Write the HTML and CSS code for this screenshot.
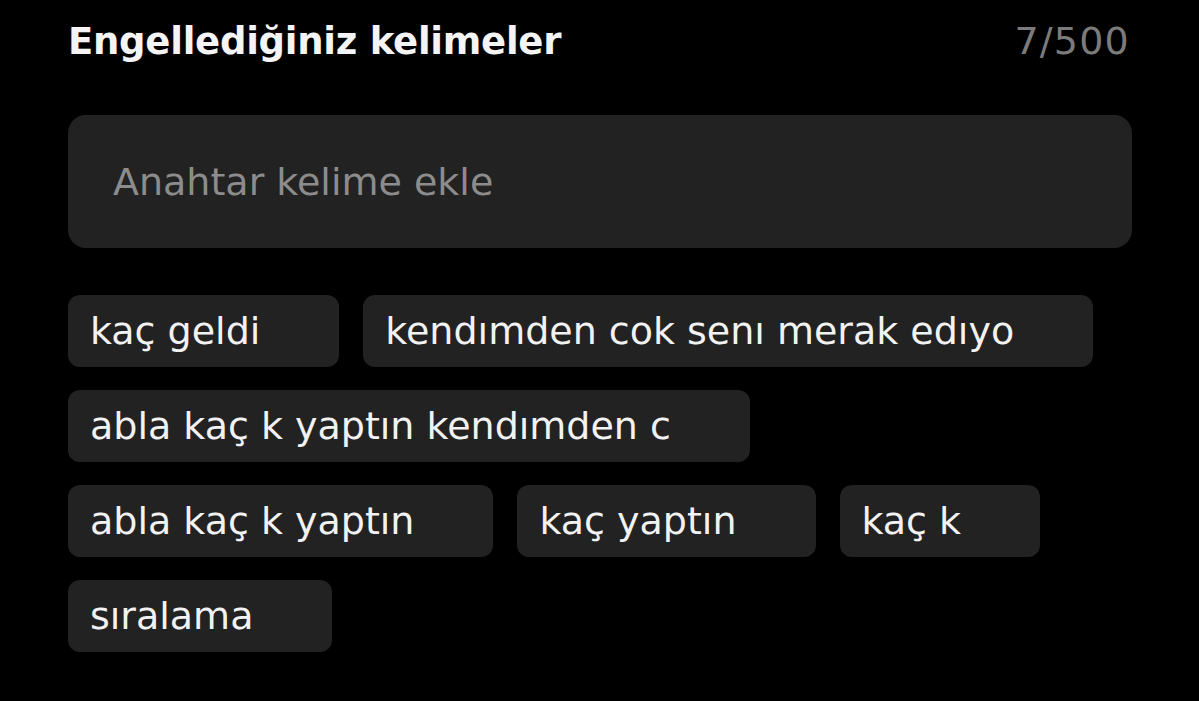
FILE: index.html
```html
<!DOCTYPE html>
<html lang="tr">
<head>
<meta charset="utf-8">
<link rel="stylesheet" href="styles.css">
</head>
<body>
<main class="page">
  <header class="head">
    <h1 class="title">Engellediğiniz kelimeler</h1>
    <span class="count">7/500</span>
  </header>
  <div class="field">
    <input class="input" type="text" placeholder="Anahtar kelime ekle">
  </div>
  <ul class="chips">
    <li class="chip">kaç geldi</li>
    <li class="chip">kendımden cok senı merak edıyo</li>
    <li class="chip">abla kaç k yaptın kendımden c</li>
    <li class="chip">abla kaç k yaptın</li>
    <li class="chip">kaç yaptın</li>
    <li class="chip">kaç k</li>
    <li class="chip">sıralama</li>
  </ul>
</main>
</body>
</html>
```

FILE: styles.css
```css
* { box-sizing: border-box; }
html, body {
  margin: 0;
  padding: 0;
  background: #000;
  height: 100%;
  overflow: hidden;
}
body {
  font-family: "DejaVu Sans", "Noto Sans", "Liberation Sans", sans-serif;
  color: #f2f2f2;
}
.page {
  width: 1064px;
  margin-left: 68px;
  padding-top: 13px;
}
.head {
  display: flex;
  justify-content: space-between;
  align-items: baseline;
  height: 56px;
}
.title {
  margin: 0;
  font-size: 37px;
  font-weight: 700;
  letter-spacing: -0.25px;
  line-height: 56px;
  color: #f4f4f4;
}
.count {
  font-size: 38px;
  font-weight: 400;
  color: #7b7b7b;
  line-height: 56px;
  letter-spacing: 1.2px;
  padding-right: 2px;
}
.field {
  margin-top: 46px;
  height: 133px;
  background: #222;
  border-radius: 18px;
  display: flex;
  align-items: center;
  padding-left: 45px;
}
.input {
  width: 100%;
  background: transparent;
  border: 0;
  outline: 0;
  font-family: inherit;
  font-size: 38px;
  color: #f2f2f2;
  padding: 0;
}
.input::placeholder { color: #8c8c8c; }
.chips {
  list-style: none;
  margin: 47px 0 0;
  padding: 0;
  display: flex;
  flex-wrap: wrap;
  gap: 23px 24px;
  width: 1064px;
}
.chip {
  height: 72px;
  display: flex;
  align-items: center;
  padding: 0 79px 0 22px;
  background: #222;
  border-radius: 12px;
  font-size: 38px;
  color: #f2f2f2;
}
```
